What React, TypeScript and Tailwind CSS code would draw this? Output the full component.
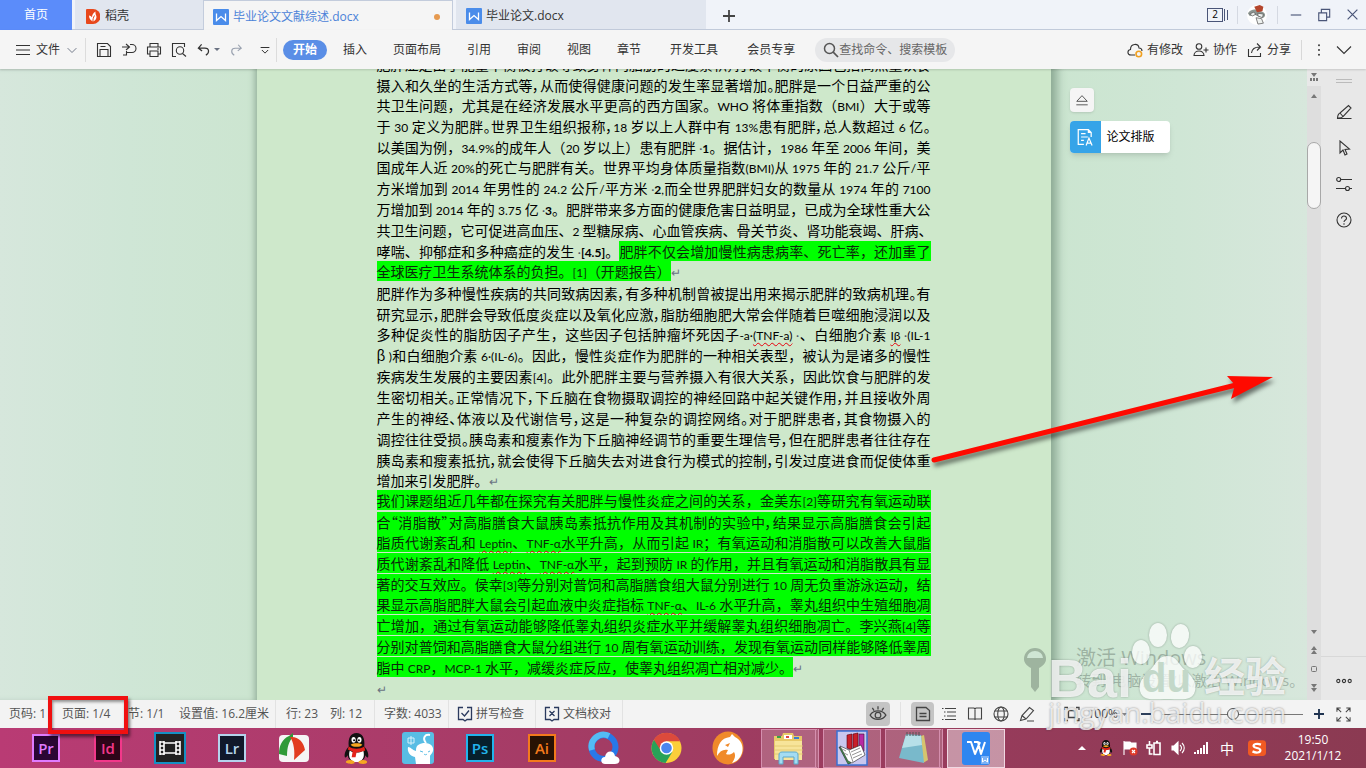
import type { ReactNode } from 'react'

type IconProps = {
  size?: number
  className?: string
  children: ReactNode
}

function Icon({ size = 16, className = '', children }: IconProps) {
  return (
    <svg
      width={size}
      height={size}
      viewBox="0 0 16 16"
      fill="none"
      stroke="currentColor"
      strokeWidth="1.1"
      className={`shrink-0 ${className}`}
      aria-hidden="true"
    >
      {children}
    </svg>
  )
}

type DocLine = {
  text?: string
  marked?: string
  tight?: boolean
  end?: boolean
}

// *text* is bold, ~text~ carries a spelling mark
const lines: DocLine[] = [
  { text: '肥胖症是由于能量平衡被打破导致身体内脂肪的过度累积，打破平衡的原因包括高热量饮食', tight: true },
  { text: '摄入和久坐的生活方式等，从而使得健康问题的发生率显著增加。肥胖是一个日益严重的公', tight: true },
  { text: '共卫生问题，尤其是在经济发展水平更高的西方国家。WHO 将体重指数（BMI）大于或等' },
  { text: '于 30 定义为肥胖。世界卫生组织报称，18 岁以上人群中有 13%患有肥胖，总人数超过 6 亿。', tight: true },
  { text: '以美国为例，34.9%的成年人（20 岁以上）患有肥胖 · *1*。据估计，1986 年至 2006 年间，美' },
  { text: '国成年人近 20%的死亡与肥胖有关。世界平均身体质量指数(BMI)从 1975 年的 21.7 公斤/平' },
  { text: '方米增加到 2014 年男性的 24.2 公斤/平方米 · *2*,而全世界肥胖妇女的数量从 1974 年的 7100' },
  { text: '万增加到 2014 年的 3.75 亿 · *3*。肥胖带来多方面的健康危害日益明显，已成为全球性重大公' },
  { text: '共卫生问题，它可促进高血压、2 型糖尿病、心血管疾病、骨关节炎、肾功能衰竭、肝病、' },
  { text: '哮喘、抑郁症和多种癌症的发生 · *[4.5]*。', marked: '肥胖不仅会增加慢性病患病率、死亡率，还加重了' },
  { marked: '全球医疗卫生系统体系的负担。[1]（开题报告）', end: true },
  { text: '肥胖作为多种慢性疾病的共同致病因素，有多种机制曾被提出用来揭示肥胖的致病机理。有', tight: true },
  { text: '研究显示，肥胖会导致低度炎症以及氧化应激，脂肪细胞肥大常会伴随着巨噬细胞浸润以及', tight: true },
  { text: '多种促炎性的脂肪因子产生，这些因子包括肿瘤坏死因子-a·~(TNF-a)~ · 、白细胞介素 ~Iβ~ · (IL-1' },
  { text: 'β )和白细胞介素 6·(IL-6)。因此，慢性炎症作为肥胖的一种相关表型，被认为是诸多的慢性' },
  { text: '疾病发生发展的主要因素[4]。此外肥胖主要与营养摄入有很大关系，因此饮食与肥胖的发' },
  { text: '生密切相关。正常情况下，下丘脑在食物摄取调控的神经回路中起关键作用，并且接收外周', tight: true },
  { text: '产生的神经、体液以及代谢信号，这是一种复杂的调控网络。对于肥胖患者，其食物摄入的', tight: true },
  { text: '调控往往受损。胰岛素和瘦素作为下丘脑神经调节的重要生理信号，但在肥胖患者往往存在', tight: true },
  { text: '胰岛素和瘦素抵抗，就会使得下丘脑失去对进食行为模式的控制，引发过度进食而促使体重', tight: true },
  { text: '增加来引发肥胖。', end: true },
  { marked: '我们课题组近几年都在探究有关肥胖与慢性炎症之间的关系，金美东[2]等研究有氧运动联' },
  { marked: '合“消脂散”对高脂膳食大鼠胰岛素抵抗作用及其机制的实验中，结果显示高脂膳食会引起', tight: true },
  { marked: '脂质代谢紊乱和 ~Leptin~、~TNF-α~水平升高，从而引起 IR；有氧运动和消脂散可以改善大鼠脂' },
  { marked: '质代谢紊乱和降低 ~Leptin~、~TNF-α~水平，起到预防 IR 的作用，并且有氧运动和消脂散具有显' },
  { marked: '著的交互效应。侯幸[3]等分别对普饲和高脂膳食组大鼠分别进行 10 周无负重游泳运动，结' },
  { marked: '果显示高脂肥胖大鼠会引起血液中炎症指标 ~TNF-α~、IL-6 水平升高，睾丸组织中生殖细胞凋' },
  { marked: '亡增加，通过有氧运动能够降低睾丸组织炎症水平并缓解睾丸组织细胞凋亡。李兴燕[4]等' },
  { marked: '分别对普饲和高脂膳食大鼠分组进行 10 周有氧运动训练，发现有氧运动同样能够降低睾周' },
  { marked: '脂中 CRP，MCP-1 水平，减缓炎症反应，使睾丸组织凋亡相对减少。', end: true },
  { end: true },
]

const latin = "font-['Lato','Noto_Sans_CJK_SC',sans-serif] text-[12px]"

function renderRuns(text: string) {
  return text.split(/(\*[^*]+\*|~[^~]+~|[A-Za-z0-9.%()[\]/,·-]+|(?: · ))/).map((run, i) => {
    if (run.startsWith('*')) {
      return <b key={i} className={latin}>{run.slice(1, -1)}</b>
    }
    if (run.startsWith('~')) {
      return (
        <span key={i} className={`${latin} underline decoration-red-600 decoration-wavy decoration-1 underline-offset-2`}>
          {run.slice(1, -1)}
        </span>
      )
    }
    if (run === ' · ') {
      return <span key={i} className={`${latin} text-gray-600`}>{' ·'}</span>
    }
    if (/^[A-Za-z0-9.%()[\]/,-]/.test(run)) {
      return <span key={i} className={latin}>{run}</span>
    }
    return run
  })
}

function TextLine({ text, marked, tight, end }: DocLine) {
  return (
    <div
      className={`flex min-h-0 items-center whitespace-nowrap ${tight ? "[font-feature-settings:'palt']" : ''}`}
    >
      <p className={`leading-5 ${end ? '' : 'w-full [text-align-last:justify]'}`}>
        {text && renderRuns(text)}
        {marked && <mark className="bg-[#00ff00] text-[#0a2a0a]">{renderRuns(marked)}</mark>}
        {end && <span className="text-[12px] text-gray-500">↵</span>}
      </p>
    </div>
  )
}

function WpsMark() {
  return (
    <svg width="16" height="16" viewBox="0 0 16 16" aria-hidden="true">
      <rect width="16" height="16" rx="1" fill="#4a8cea" />
      <path d="M3.5 4.5v7L8 7.500l4.500 4v-7" fill="none" stroke="#fff" strokeWidth="1.300" />
    </svg>
  )
}

function TabBar() {
  return (
    <header className="flex h-[30px] shrink-0 bg-[#f0f3f9] text-[12px] text-[#333]">
      <button type="button" className="w-[72px] bg-[#5b8cfa] text-white">首页</button>
      <div className="flex flex-1 border-b border-[#c3ccdc]">
        <button type="button" className="ml-[3px] flex w-[128px] items-center gap-[5px] bg-[#e1e6ef] pt-[3px] pl-[11px]">
          <svg width="14" height="15" viewBox="0 0 14 15" aria-hidden="true">
            <path d="M1 0h6a7 7 0 0 1 0 15H1a1 1 0 0 1-1-1V1a1 1 0 0 1 1-1z" fill="#e8481c" />
            <path d="M7 12.500C4.500 11.500 3 9.500 3 6.500c1.500.3 2.500 1 3 2C6 6 7 4 9.500 2.500c-.2 2 .2 3 .7 4 .8 2-.2 5-3.200 6z" fill="#fff" />
            <path d="M7 12.500c-.2-2 .3-4 1.500-6" stroke="#e8481c" fill="none" />
          </svg>
          稻壳
        </button>
        <button
          type="button"
          className="-mb-px flex w-[250px] items-center gap-1 border border-b-0 border-[#c3ccdc] bg-[#f5f5f5] pt-[2px] pr-3 pl-[9px] text-[#4b82d8]"
        >
          <WpsMark />
          毕业论文文献综述.docx
          <span className="ml-auto h-[6px] w-[6px] rounded-full bg-[#e69a50]" />
        </button>
        <button type="button" className="ml-[3px] flex w-[250px] items-center gap-1 bg-[#e1e6ef] pt-[3px] pl-[10px]">
          <WpsMark />
          毕业论文.docx
        </button>
        <button type="button" aria-label="新建" className="w-[46px] pt-[3px] pl-[17px] text-[#444]">
          <Icon size={12}><path d="M8 0v16M0 8h16" strokeWidth="2.400" /></Icon>
        </button>
        <div className="ml-auto flex items-center pr-[7px] text-[#4a5578]">
          <button type="button" aria-label="窗口" className="flex items-center gap-px">
            <span className="flex h-[14px] w-[16px] items-center justify-center border border-[#4a5578] text-[10px] text-black">2</span>
            <span className="h-3 w-px bg-[#4a5578]" />
            <span className="ml-px h-[10px] w-px bg-[#4a5578]" />
          </button>
          <span className="mx-[9px] h-[18px] w-px bg-[#d5d9e2]" />
          <svg width="20" height="22" viewBox="0 0 22 22" aria-label="头像">
            <circle cx="11" cy="11" r="11" fill="#fff" />
            <path d="M1 9c3-4 6-4 9-4l8 3c3 2 2 5 0 6l-5-1-4-2-6 1z" fill="#8d9692" />
            <path d="M3 10l4-2 3 2-4 2zM12 9l6 1-1 4-5-2zM10 14l6 1 2 5-6 1z" fill="#eef1ef" stroke="#555" strokeWidth=".8" />
            <path d="M8 2l6-2 4 2-1 5-6 1z" fill="#b4452c" />
          </svg>
          <span className="mx-[10px] h-[18px] w-px bg-[#d5d9e2]" />
          <div className="flex items-center gap-[15px] pl-[2px]">
            <button type="button" aria-label="最小化"><Icon size={12}><path d="M1 8h14" strokeWidth="1.500" /></Icon></button>
            <button type="button" aria-label="还原">
              <Icon size={14}><path d="M2 5.500h9v9H2zM5 5V1.500h9.500v9H11.500" strokeWidth="1.300" /></Icon>
            </button>
            <button type="button" aria-label="关闭"><Icon size={13}><path d="M2 2l12 12M14 2L2 14" strokeWidth="1.500" /></Icon></button>
          </div>
        </div>
      </div>
    </header>
  )
}

function Toolbar() {
  return (
    <div className="z-10 flex h-[39px] shrink-0 items-center bg-[#f5f5f5] pl-[15px] text-[12px] text-[#333] shadow-[0_1px_2px_rgba(0,0,0,0.15)]">
      <button type="button" className="flex items-center gap-[5px]">
        <Icon><path d="M1 3.500h14M1 8h14M1 12.500h14" /></Icon>
        文件
        <Icon size={10} className="ml-[2px] text-gray-500"><path d="M1 5l7 7 7-7" strokeWidth="1.500" /></Icon>
      </button>
      <span className="ml-2 h-6 w-px bg-[#dcdcdc]" />
      <div className="ml-[10px] flex items-center gap-[9px]">
        <button type="button" aria-label="保存">
          <Icon><path d="M1.500 1.500h10l3 3v10h-13zM4 14V7.500h8V14M4.500 4.500h5" /></Icon>
        </button>
        <button type="button" aria-label="输出">
          <Icon><path d="M1 5h8M5 2l3.500 3L5 8M9 2.500h2a4 4 0 0 1 0 8H5.500v2.500H2M5.500 10.500V9" /></Icon>
        </button>
        <button type="button" aria-label="打印">
          <Icon><path d="M4 5V1.500h8V5M4 12H1.500V5h13v7H12M4 9h8v5.500H4zM11 7h2" /></Icon>
        </button>
        <button type="button" aria-label="打印预览">
          <Icon><path d="M5 14.500H1.500v-13h12V5M11.500 11.500l3.500 3" /><circle cx="9" cy="8.500" r="3.700" /></Icon>
        </button>
        <button type="button" aria-label="撤销" className="flex items-center gap-[3px]">
          <Icon size={15}><path d="M6 2.500L2.500 6.500l4 3M3 6.500h6.500c5 0 5 5.500 1 7.500" strokeWidth="1.300" /></Icon>
          <svg width="6" height="3" className="text-gray-500" aria-hidden="true"><path d="M0 0h6L3 3z" fill="currentColor" /></svg>
        </button>
        <button type="button" aria-label="恢复" className="text-gray-400">
          <Icon size={14}><path d="M10.500 2L14 6l-4 3M13.500 6H7C2 6 2 11.500 6 14" strokeWidth="1.300" /></Icon>
        </button>
        <button type="button" aria-label="更多" className="pl-2">
          <Icon size={10}><path d="M1 4h14M3 8l5 5 5-5" strokeWidth="1.600" /></Icon>
        </button>
      </div>
      <span className="ml-[6px] h-6 w-px bg-[#dcdcdc]" />
      <nav className="ml-[6px] flex shrink-0 items-center gap-[29px] whitespace-nowrap">
        <div className="flex items-center gap-[26px]">
          <button type="button" className="-mr-[10px] h-5 w-11 rounded-full bg-[#5a8ee6] font-bold text-white">开始</button>
          <button type="button">插入</button>
          <button type="button">页面布局</button>
          <button type="button">引用</button>
          <button type="button">审阅</button>
          <button type="button">视图</button>
          <button type="button">章节</button>
        </div>
        <button type="button">开发工具</button>
        <button type="button">会员专享</button>
      </nav>
      <label className="ml-5 flex h-6 w-[140px] items-center rounded-full bg-[#e6e7e9] pl-2 text-[#555]">
        <Icon><circle cx="6.500" cy="6.500" r="5" strokeWidth="1.500" /><path d="M10.200 10.200L15 15" strokeWidth="1.700" /></Icon>
        <input aria-label="查找" placeholder="查找命令、搜索模板" className="w-full bg-transparent outline-none placeholder:text-[#666]" />
      </label>
      <div className="ml-auto flex shrink-0 items-center gap-[10px] pr-[14px] whitespace-nowrap">
        <button type="button" className="flex items-center gap-1">
          <Icon><path d="M8 13H4C0 13 0 8 3.500 7.500 3.500 1 11.500 1 12 6c2 0 3 1.500 3 3" /><circle cx="11.800" cy="12" r="2.800" stroke="#f0a020" strokeWidth="1.600" /></Icon>
          有修改
        </button>
        <button type="button" className="flex items-center gap-1">
          <Icon><circle cx="6" cy="4.500" r="2.800" /><path d="M1 13.500c0-6 10-6 10 0zM13 5.500v5M10.500 8h5" /></Icon>
          协作
        </button>
        <button type="button" className="flex items-center gap-1">
          <Icon><path d="M1.500 7v7.500h12V11M4.500 11c.5-4 3-6 8-6M10 1.500L13.500 5 10 8.500" /></Icon>
          分享
        </button>
        <span className="h-5 w-px bg-[#d8d8d8]" />
        <button type="button" aria-label="更多选项">
          <Icon size={14}><g fill="currentColor" stroke="none"><circle cx="8" cy="2.500" r="1.100" /><circle cx="8" cy="8" r="1.100" /><circle cx="8" cy="13.500" r="1.100" /></g></Icon>
        </button>
        <button type="button" aria-label="收起"><Icon><path d="M1 4.500l7 7 7-7" /></Icon></button>
      </div>
    </div>
  )
}

function ScrollBar() {
  return (
    <div className="flex w-[14px] flex-col items-center bg-[#dedede] text-[#777]">
      <div className="flex h-[17px] w-full items-center justify-center bg-[#e8e8e8]">
        <svg width="8" height="9" viewBox="0 0 8 9" fill="currentColor" aria-hidden="true"><path d="M1 0h6L4 4zM0 5h2v3H0zM3 5h2v3H3zM6 5h2v3H6z" /></svg>
      </div>
      <svg width="6" height="4" className="mt-2" aria-hidden="true"><path d="M0 4h6L3 0z" fill="currentColor" /></svg>
      <div className="mt-[44px] h-[67px] w-[14px] rounded-full border border-[#a8a8a8] bg-[#f5f5f5]" />
      <div className="mt-auto flex flex-col items-center gap-[12px] pb-2">
        <svg width="6" height="4" aria-hidden="true"><path d="M0 0h6L3 4z" fill="currentColor" /></svg>
        <svg width="6" height="8" aria-hidden="true"><path d="M0 4h6L3 0zM0 8h6L3 4z" fill="currentColor" /></svg>
        <svg width="6" height="6" aria-hidden="true"><rect x=".5" y=".5" width="5" height="5" rx="1" fill="none" stroke="currentColor" /></svg>
        <svg width="6" height="8" aria-hidden="true"><path d="M0 0h6L3 4zM0 4h6L3 8z" fill="currentColor" /></svg>
      </div>
    </div>
  )
}

function SideRail() {
  return (
    <aside className="flex w-[45px] flex-col items-center bg-[#e8e8e8] text-[#333]">
      <span className="mt-[10px] h-1 w-4 border-y border-[#bbb]" />
      <div className="mt-[21px] flex flex-col gap-5">
        <button type="button" aria-label="画笔">
          <Icon><path d="M1 14.500h14.500M1.500 14c.3-3 1-4.500 2.500-5L12.500 1.500l2.500 2.500-8 8.500c-1 1.500-3 1.700-5.500 1.500zM4 9l3 3.500" /></Icon>
        </button>
        <button type="button" aria-label="选择">
          <Icon><path d="M4 1v12l3-3 2 5 2-1-2-4.500 4.500-.5z" /></Icon>
        </button>
        <button type="button" aria-label="设置">
          <Icon><circle cx="2.700" cy="3.500" r="2" /><path d="M4.700 3.500H16M0 12.500h9.500M13.500 12.500H16" /><circle cx="11.500" cy="12.500" r="2" /></Icon>
        </button>
        <button type="button" aria-label="帮助">
          <Icon><circle cx="8" cy="8" r="7" /><path d="M5.500 6.500c0-3.500 5-3.200 5 0C10.500 8 8 8 8 10M8 11.300v1.400" /></Icon>
        </button>
      </div>
      <div className="mt-auto flex w-full justify-center border-t border-[#d8d8d8] pt-4 pb-[11px]">
        <button type="button" aria-label="更多">
          <Icon><circle cx="2.300" cy="8" r="1.600" /><circle cx="8" cy="8" r="1.600" /><circle cx="13.700" cy="8" r="1.600" /></Icon>
        </button>
      </div>
    </aside>
  )
}

function Workspace() {
  return (
    <main className="relative flex min-h-0 flex-1">
      <div className="flex-1 bg-linear-to-r from-[#d6e7dc] via-[#cfe6d6] to-[#cce5d0] shadow-[inset_-5px_0_6px_-3px_rgba(90,120,100,0.5)]" />
      <article className="flex w-[794px] flex-col justify-end overflow-hidden bg-[#cee8cb] px-[120px] pb-px font-['Noto_Sans_CJK_SC',sans-serif] text-[14px] text-black">
        <div className="grid h-[645px] shrink-0 auto-rows-fr grid-cols-1">
          {lines.map((line, i) => (
            <TextLine key={i} {...line} />
          ))}
        </div>
      </article>
      <div className="flex-1 bg-linear-to-r from-[#cbe5d0] via-[#cfe6d5] to-[#d7e7dc] shadow-[inset_14px_0_10px_-8px_rgba(90,120,100,0.55)]">
        <div className="flex flex-col items-start pt-[19px] pl-[19px]">
          <button type="button" aria-label="收起面板" className="flex h-6 w-6 items-center justify-center rounded-sm bg-[#f5f5f5] text-[#555] shadow-sm">
            <Icon size={14}><path d="M2 9.500L8 3l6 6.500zM1.500 13.500h13" /></Icon>
          </button>
          <button type="button" className="mt-[9px] flex h-8 w-[100px] overflow-hidden rounded-sm bg-white text-[12px] text-black shadow-md">
            <span className="flex h-full w-[31px] items-center justify-center bg-[#36a4e8] text-white">
              <Icon size={18}><path d="M7 14.500H2V1.500h9L13.500 4v4M11 1.500V4h2.500M4.500 5h4M4.500 8h6M4.500 11h2.500M9 15.500l2.500-6.500 2.800 6.500M9.700 13.500h4" /></Icon>
            </span>
            <span className="flex h-full flex-1 items-center pl-[6px]">论文排版</span>
          </button>
        </div>
      </div>
      <ScrollBar />
      <SideRail />
      <svg className="pointer-events-none absolute top-[294px] right-[86px] drop-shadow-[2px_4px_2px_rgba(0,0,0,0.5)]" width="350" height="106" viewBox="0 0 350 106" aria-hidden="true">
        <path d="M4 97L306 22" stroke="#ff0a00" strokeWidth="5" strokeLinecap="round" />
        <path d="M343 14L297 13l8 9-4 14z" fill="#ff0a00" />
      </svg>
    </main>
  )
}

function StatusBar() {
  const divider = <span className="h-[28px] w-px bg-[#e2e2e2]" />
  return (
    <footer className="relative flex h-7 shrink-0 items-center bg-[#f3f3f3] pl-[9px] text-[12px] whitespace-nowrap text-[#555]">
      <span className="w-[53px]">页码: 1</span>
      <span className="relative w-[66px]">
        页面: 1/4
        <span className="absolute -top-[9px] -left-[14px] z-20 h-[38px] w-[80px] border-4 border-[#f01010] shadow-[2px_3px_3px_rgba(0,0,0,0.5),inset_1px_2px_3px_rgba(0,0,0,0.4)]" />
      </span>
      <span className="w-[51px]">节: 1/1</span>
      <span className="w-[96px]">设置值: 16.2厘米</span>
      {divider}
      <span className="w-[44px] pl-[10px]">行: 23</span>
      <span className="w-[54px] pl-[10px]">列: 12</span>
      {divider}
      <span className="w-[73px] pl-[9px]">字数: 4033</span>
      {divider}
      <button type="button" className="flex w-[86px] items-center gap-[3px] pl-2">
        <Icon><path d="M6 1.500H1.500v12H6l2 1.500 2-1.500h4.500v-12H10M4.500 7L7.500 10l4.500-5.500" stroke="#2b3a5e" strokeWidth="1.300" /></Icon>
        拼写检查
      </button>
      {divider}
      <button type="button" className="flex w-[86px] items-center gap-[3px] pl-2">
        <Icon><path d="M6 1.500H1.500v12H6l2 1.500 2-1.500h4.500v-12H10M5.500 5l5 5M10.500 5l-5 5" stroke="#2b3a5e" strokeWidth="1.300" /></Icon>
        文档校对
      </button>
      {divider}
      <div className="ml-auto flex items-center pr-[15px] text-[#444]">
        <button type="button" aria-label="护眼模式" className="flex h-6 w-6 items-center justify-center rounded-sm bg-[#c4c4c4]">
          <Icon size={18}><path d="M1 9c3-5 11-5 14 0-3 5-11 5-14 0zM8 1v3M3 2.500L4.500 5M13 2.500L11.500 5" /><circle cx="8" cy="9" r="2.500" /></Icon>
        </button>
        <span className="mx-[10px] h-6 w-px bg-[#e2e2e2]" />
        <button type="button" aria-label="页面视图" className="flex h-6 w-[23px] items-center justify-center rounded-sm bg-[#c4c4c4]">
          <Icon><path d="M1.500 1.500h9.500l3.500 3v10h-13zM4.500 7.500h7M4.500 10.500h7" strokeWidth="1.300" /></Icon>
        </button>
        <div className="ml-[7px] flex items-center gap-[10px]">
          <button type="button" aria-label="大纲"><Icon><path d="M1 2.500h1.500M4 2.500h11M3 6h1.500M6 6h9M3 10h1.500M6 10h9M1 13.500h1.500M4 13.500h11" /></Icon></button>
          <button type="button" aria-label="阅读版式"><Icon><path d="M8 3V14M8 13H1.500V2H7l1 1 1-1h5.500v11H8" /></Icon></button>
          <button type="button" aria-label="Web版式"><Icon><circle cx="8" cy="8" r="7" /><ellipse cx="8" cy="8" rx="3.300" ry="7" /><path d="M1.800 5h12.400M1.800 11h12.400" /></Icon></button>
          <button type="button" aria-label="写作模式"><Icon><path d="M1.500 14.500L3 9.500 10.500 1.500l4 3L7 13zM3 9.500L7 13M8 15h7" /></Icon></button>
        </div>
        <button type="button" aria-label="适合页面" className="ml-[29px]">
          <Icon><path d="M1 4V1.500h3M12 1.500h3V4M15 12v2.500h-3M4 14.500H1V12M4.500 4.500h7v7h-7z" strokeWidth="1.300" /></Icon>
        </button>
        <button type="button" className="ml-[7px] flex items-center gap-1">
          100%
          <svg width="5" height="3" aria-hidden="true"><path d="M0 0h5L2.500 3z" fill="#888" /></svg>
        </button>
        <button type="button" aria-label="缩小" className="ml-[14px] flex h-4 w-[10px] items-center text-[#1f3350]"><Icon size={10}><path d="M0 8h16" strokeWidth="3" /></Icon></button>
        <input
          type="range"
          aria-label="显示比例"
          defaultValue={50}
          className="mx-[11px] h-3 w-[141px] appearance-none bg-[linear-gradient(#777,#777)] bg-[length:100%_1px] bg-center bg-no-repeat [&::-webkit-slider-thumb]:h-3 [&::-webkit-slider-thumb]:w-3 [&::-webkit-slider-thumb]:appearance-none [&::-webkit-slider-thumb]:rounded-full [&::-webkit-slider-thumb]:border [&::-webkit-slider-thumb]:border-solid [&::-webkit-slider-thumb]:border-[#555] [&::-webkit-slider-thumb]:bg-[#f3f3f3]"
        />
        <button type="button" aria-label="放大" className="text-[#1f3350]"><Icon size={10}><path d="M0 8h16M8 0v16" strokeWidth="3" /></Icon></button>
        <button type="button" aria-label="全屏" className="ml-3">
          <Icon size={15}><path d="M1 5V1h4M11 1h4v4M15 11v4h-4M5 15H1v-4M1 1l4.500 4.500M15 1l-4.500 4.500M15 15l-4.500-4.500M1 15l4.500-4.500" /></Icon>
        </button>
      </div>
    </footer>
  )
}

type AdobeProps = { label: string; color: string; fill: string }

function AdobeIcon({ label, color, fill }: AdobeProps) {
  return (
    <span
      className="flex h-7 w-7 items-center justify-center border-2 font-['Open_Sans',sans-serif] text-[15px] font-semibold"
      style={{ color, borderColor: color, backgroundColor: fill }}
    >
      {label}
    </span>
  )
}

function Penguin({ size }: { size: number }) {
  return (
    <svg width={size} height={size} viewBox="0 0 32 32" aria-hidden="true">
      <path d="M8 14C7 5 10 0 16 0s9 5 8 14c3 3 5 8 4 11-1 1-2-1-3-2 0 4-4 7-9 7s-9-3-9-7c-1 1-2 3-3 2-1-3 1-8 4-11z" fill="#111" />
      <path d="M9 18c4 3 10 3 14 0 2 7-1 12-7 12S7 25 9 18z" fill="#fff" />
      <ellipse cx="13" cy="7" rx="2.200" ry="3" fill="#fff" />
      <ellipse cx="19" cy="7" rx="2.200" ry="3" fill="#fff" />
      <circle cx="13.500" cy="7.500" r="1" />
      <circle cx="18.500" cy="7.500" r="1" />
      <path d="M10 12c3-2 9-2 12 0-2 3-10 3-12 0z" fill="#f6a821" />
      <path d="M8 14c5 3 11 3 16 0l1 4c-3 1-6 2-9 2v0l-1 5h-4l1-6-5-2z" fill="#e3231b" />
      <path d="M5 30c0-3 8-3 9 0s-9 2-9 0zM18 30c1-3 9-3 9 0s-10 2-9 0z" fill="#f6a821" />
    </svg>
  )
}

const apps: { name: string; icon: ReactNode; state?: 'open' | 'stack' | 'active' }[] = [
  { name: 'Premiere', icon: <AdobeIcon label="Pr" color="#df7bff" fill="#2a0634" /> },
  { name: 'InDesign', icon: <AdobeIcon label="Id" color="#f2388a" fill="#2e0519" /> },
  {
    name: 'Video',
    icon: (
      <svg width="32" height="32" viewBox="0 0 32 32" aria-hidden="true">
        <rect x="1" y="1" width="30" height="30" fill="#222" stroke="#1590c4" strokeWidth="2" />
        <path d="M6 9v14M10 9v14M22 9v14M26 9v14M10 11h12M10 21h12M6 10h4M6 14h4M6 18h4M6 22h4M22 10h4M22 14h4M22 18h4M22 22h4" stroke="#fff" strokeWidth="1.600" />
      </svg>
    ),
  },
  { name: 'Lightroom', icon: <AdobeIcon label="Lr" color="#b4d3ec" fill="#10182a" /> },
  {
    name: 'Capture',
    icon: (
      <svg width="30" height="30" viewBox="0 0 30 30" aria-hidden="true">
        <rect y="2" width="30" height="27" rx="4" fill="#f5f5f5" />
        <path d="M14 0l-4 3C3 6 0 13 0 21l8 2C8 14 10 8 14 4z" fill="#2f9a38" />
        <path d="M11 4c8-1 14 5 15 13l-11 10C16 18 15 10 11 4z" fill="#e23c20" />
      </svg>
    ),
  },
  { name: 'QQ', icon: <Penguin size={31} /> },
  {
    name: 'Pet',
    icon: (
      <svg width="32" height="32" viewBox="0 0 32 32" aria-hidden="true">
        <rect width="32" height="32" rx="3" fill="#58bde4" />
        <path d="M24 11c-4-5-1-9 4-8" fill="none" stroke="#fff" strokeWidth="2" />
        <path d="M14 18c0-5 4-7 9-7 6 0 9 4 8 8-1 3-3 4-3 5v8H14l-1-7c-5-1-8-5-7-10 3 0 4 3 8 4z" fill="#fff" />
        <path d="M18 19l3 1M28 19l-2 1M22 22c1 1 2 1 3 0" stroke="#58bde4" fill="none" />
        <path d="M6 6h6v5H6zM9 4v9" stroke="#d9f1fa" fill="none" />
      </svg>
    ),
  },
  { name: 'Photoshop', icon: <AdobeIcon label="Ps" color="#22b4ec" fill="#06202c" /> },
  { name: 'Illustrator', icon: <AdobeIcon label="Ai" color="#f37a1c" fill="#281203" /> },
  {
    name: 'QQ Browser',
    icon: (
      <svg width="32" height="34" viewBox="0 0 32 34" aria-hidden="true">
        <circle cx="15.500" cy="16" r="12" fill="none" stroke="#2878e8" strokeWidth="6" />
        <path d="M4 19A12 12 0 0 1 21 5" fill="none" stroke="#54bcf4" strokeWidth="6" />
        <path d="M17 33c-5 0-5-7 0-7 1-7 9-7 10-1 6 1 6 8 0 8z" fill="#fff" />
      </svg>
    ),
  },
  {
    name: 'Chrome',
    icon: (
      <svg width="31" height="32" viewBox="0 0 32 32" aria-hidden="true">
        <circle cx="16" cy="16" r="15.500" fill="#fbcf3a" />
        <path d="M16 16l6 4-7 11.500A15.500 15.500 0 0 1 3 7.500z" fill="#28a258" />
        <path d="M16 9h14A15.500 15.500 0 0 0 3 7.500L9 17z" fill="#dc4a3c" />
        <circle cx="16" cy="16" r="7" fill="#fff" />
        <circle cx="16" cy="16" r="5.500" fill="#4a86ee" />
      </svg>
    ),
  },
  {
    name: 'Cheetah',
    icon: (
      <svg width="32" height="34" viewBox="0 0 32 34" aria-hidden="true">
        <ellipse cx="16" cy="17" rx="15.500" ry="16.500" fill="#f08a2a" />
        <path d="M5 25C5 14 9 7 18 6l2-3 3 3c6 3 9 9 7 16-2 6-6 9-10 10 3-4 4-8 2-11-3 3-6 3-8 2l2-4c-5-1-8 1-11 6z" fill="#fff" />
        <path d="M13 14l5-2-2 4z" fill="#f08a2a" />
      </svg>
    ),
  },
  {
    name: 'Explorer',
    state: 'stack',
    icon: (
      <svg width="34" height="34" viewBox="0 0 34 34" aria-hidden="true">
        <path d="M2 5h8l1-3h10l1 3h8v23H2z" fill="#e8c968" />
        <path d="M3 10h27v19H3z" fill="#f7e49a" />
        <path d="M12 4h8v4h-8z" fill="#fff" />
        <path d="M5 5h4v2H5z" fill="#36a04a" /><path d="M22 6h5v2h-5z" fill="#3c7ed0" /><path d="M14 5h3v2h-3z" fill="#d44" />
        <path d="M2 15h29M2 19h29M2 23h29" stroke="#dfc46a" strokeWidth=".8" />
        <path d="M7 33V24c0-2 1-3 3-3h13c2 0 3 1 3 3v9h-4v-7H11v7z" fill="#a4dcf2" stroke="#5aa9cc" />
      </svg>
    ),
  },
  {
    name: 'Library',
    state: 'open',
    icon: (
      <svg width="32" height="36" viewBox="0 0 32 36" aria-hidden="true">
        <rect x="1" y="1" width="30" height="34" fill="#c9c7ee" stroke="#3a70d4" strokeWidth="1.500" />
        <path d="M11 5l5-1v16l-5-2zM17 4l5-1v16l-5 2z" fill="#c8202a" stroke="#501" strokeWidth=".6" />
        <path d="M23 4h5v17l-5 2z" fill="#b82aa4" stroke="#413" strokeWidth=".6" />
        <path d="M3 17l9 4 3 12-3 1z" fill="#3f9a50" stroke="#222" strokeWidth=".6" />
        <path d="M4 16l9 4 12-5 4 10-13 8-4-2z" fill="#fff" stroke="#222" strokeWidth=".6" />
        <path d="M13 20l4 12M15 22l9-4M16 25l9-4M17 28l9-4M6 19l4 2M8 23l4 2" stroke="#777" strokeWidth=".8" />
      </svg>
    ),
  },
  {
    name: 'Notepad',
    state: 'stack',
    icon: (
      <svg width="32" height="34" viewBox="0 0 32 34" aria-hidden="true">
        <path d="M24 5l3-1 4 25-5 3z" fill="#d6c46e" />
        <path d="M9 3l15 1 3 28L2 27z" fill="#79b9cb" />
        <path d="M9 4l15 1 1 9L5 17z" fill="#b7e0e8" />
        <path d="M10 1v4M13 1v4M16 1v4M19 1v4M22 1v4" stroke="#555" />
      </svg>
    ),
  },
  {
    name: 'WPS',
    state: 'active',
    icon: (
      <svg width="28" height="33" viewBox="0 0 28 33" aria-hidden="true">
        <rect width="28" height="33" rx="3" fill="#2f86f0" />
        <path d="M5 10h4l4 12 5-12M12 10h4l3 12 4-12" fill="none" stroke="#fff" strokeWidth="2" strokeLinejoin="round" />
        <rect x="19" y="24" width="8" height="8" fill="#7cb2f6" />
        <path d="M20.500 26v4l2.500-2 2.500 2v-4" stroke="#fff" fill="none" />
      </svg>
    ),
  },
]

function AppButton({ name, icon, state }: (typeof apps)[number]) {
  let frame = ''
  if (state === 'open') frame = 'border border-[#d58fae] bg-white/20'
  if (state === 'stack') frame = 'border border-r-4 border-double border-[#d58fae] bg-white/20'
  if (state === 'active') frame = 'border border-[#f0d8e2] bg-white/45'
  return (
    <div className="flex h-full w-[62px] shrink-0 items-center justify-center">
      <button type="button" aria-label={name} className={`flex h-[39px] w-[58px] items-center justify-center ${frame}`}>
        {icon}
      </button>
    </div>
  )
}

function TaskBar() {
  return (
    <div className="flex h-10 shrink-0 items-center bg-linear-to-r from-[#b93b74] via-[#a03c62] to-[#8b3a52] pl-[15px] text-white">
      {apps.map((app) => (
        <AppButton key={app.name} {...app} />
      ))}
      <div className="ml-auto flex items-center gap-2 pr-[18px]">
        <Icon><path d="M4 10h8L8 6z" fill="#fff" stroke="none" /></Icon>
        <Penguin size={16} />
        <Icon><path d="M2 1v14M3 2h5l1 1h5v7H9L8 9H3z" fill="#fff" stroke="#fff" /><circle cx="11.500" cy="11.500" r="4" fill="#e03a2a" stroke="none" /><path d="M10 10l3 3M13 10l-3 3" stroke="#fff" /></Icon>
        <Icon><path d="M3.500 1v4M1 5h5v3H1zM3.500 8v6h3M8 3h6v11.500H8zM10 1.500h2" strokeWidth="1.600" /></Icon>
        <Icon><path d="M2 6h2l4-4v12L4 10H2z" fill="#fff" /><path d="M10 5c2 2 2 4 0 6M12 3c3 3 3 7 0 10" /></Icon>
        <Icon><path d="M1 14v-2M4 14v-4M7 14V8M10 14V5M13 14V2" strokeWidth="2" /></Icon>
        <span className="w-[18px] text-center text-[14px]">中</span>
        <Icon size={18} className="ml-1"><rect x="0" y="1" width="16" height="14" rx="3" fill="#f05a22" stroke="none" /><path d="M11.500 5C8 3.500 4.500 4.500 5 6.500s6 1 6 3.500-4 2.500-7 1" stroke="#fff" strokeWidth="2" /></Icon>
        <div className="ml-1 w-[70px] text-center text-[12px] leading-4">
          <div>19:50</div>
          <div>2021/1/12</div>
        </div>
      </div>
    </div>
  )
}

function Watermarks() {
  return (
    <div className="pointer-events-none absolute right-[66px] bottom-[34px] z-30 h-[112px] w-[278px]">
      <div className="absolute top-[24px] left-0 flex gap-[26px] text-[#6e7f74]/50">
        <svg width="28" height="50" viewBox="0 0 28 50" aria-hidden="true">
          <path d="M2 13a11 11 0 1 1 22 0c0 4-3 7-7 9v19l-4 5-4-5V22c-4-2-7-5-7-9z" fill="currentColor" />
          <path d="M5 12a8 7 0 0 1 16 0z" fill="#cfe6d4" />
        </svg>
        <div className="whitespace-nowrap">
          <div className="text-[20px] leading-6">激活 Windows</div>
          <div className="text-[15px] leading-5">转到“电脑设置”以激活 Windows。</div>
        </div>
      </div>
      <svg className="absolute top-0 left-[107px] drop-shadow-[0_0_1px_rgba(80,90,85,0.6)]" width="84" height="79" viewBox="0 0 84 79" fill="#fff" opacity="0.75" aria-hidden="true">
        <ellipse cx="12" cy="30" rx="9" ry="12" />
        <ellipse cx="29" cy="13" rx="9" ry="12" />
        <ellipse cx="51" cy="14" rx="9" ry="12" transform="rotate(10 51 14)" />
        <ellipse cx="64" cy="35" rx="9" ry="11" />
        <path d="M38 34c10 0 11 8 18 14 8 7 12 13 10 21-3 11-14 8-28 8-13 0-24 3-27-8-2-8 3-14 9-20 7-6 8-15 18-15z" />
      </svg>
      <div className="absolute top-[29px] left-[26px] flex items-center font-['Liberation_Sans','Noto_Sans_CJK_SC',sans-serif] leading-[54px] font-bold whitespace-nowrap text-white/80">
        <span className="w-[94px] text-[54px] [text-shadow:0_0_2px_rgba(80,90,85,0.5)]">Bai</span>
        <span className="w-[62px] text-[40px] text-[#c3d8c9]">du</span>
        <span className="text-[41px] [text-shadow:0_0_2px_rgba(80,90,85,0.5)]">经验</span>
      </div>
      <div className="absolute top-[74px] left-[26px] font-['Open_Sans',sans-serif] text-[28px] leading-8 whitespace-nowrap text-white/75 [text-shadow:0_0_2px_rgba(60,60,60,0.6)]">
        jingyan.baidu.com
      </div>
    </div>
  )
}

export default function App() {
  return (
    <div className="relative flex h-screen flex-col overflow-hidden font-['Open_Sans','Noto_Sans_CJK_SC',sans-serif]">
      <TabBar />
      <Toolbar />
      <Workspace />
      <StatusBar />
      <TaskBar />
      <Watermarks />
    </div>
  )
}
